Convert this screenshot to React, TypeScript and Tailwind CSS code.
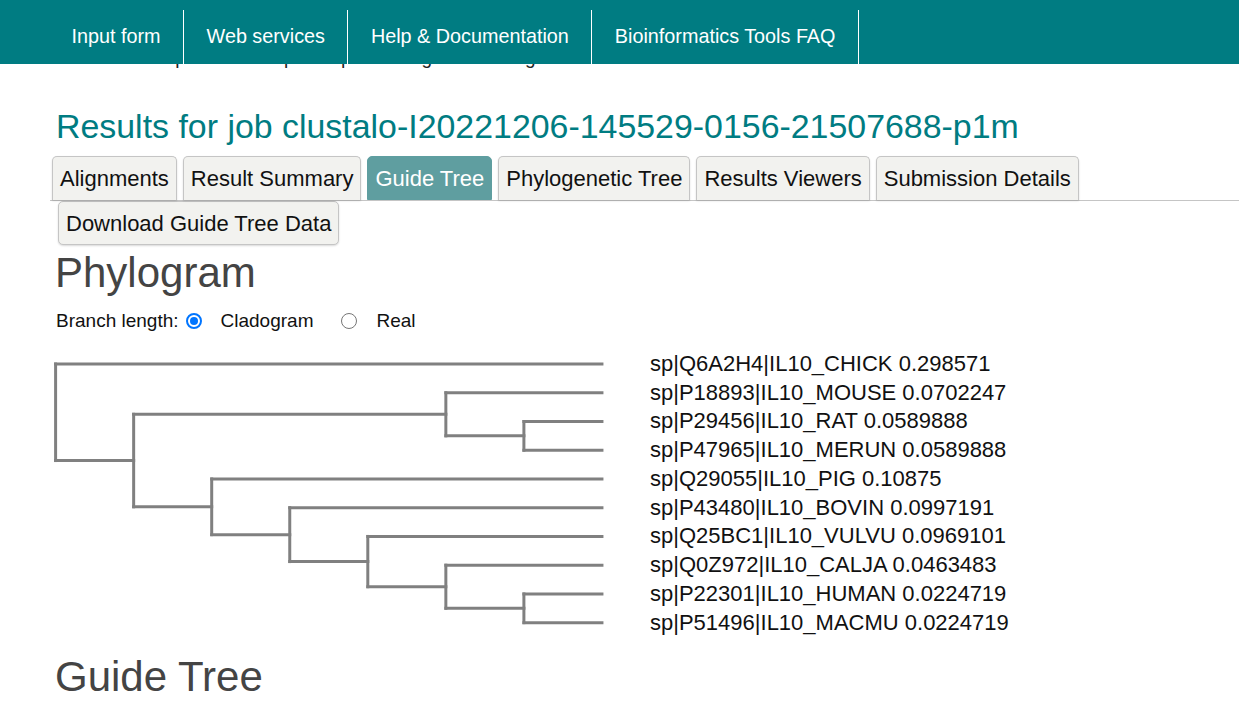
import React from 'react';

type Node = { label?: string; children?: Node[]; depth: number };

const leaf = (label: string): Node => ({ label, depth: 7 });

// cladogram: every internal node sits on a fixed depth column
const tree: Node = {
  depth: 0,
  children: [
    leaf('sp|Q6A2H4|IL10_CHICK 0.298571'),
    {
      depth: 1,
      children: [
        {
          depth: 5,
          children: [
            leaf('sp|P18893|IL10_MOUSE 0.0702247'),
            { depth: 6, children: [leaf('sp|P29456|IL10_RAT 0.0589888'), leaf('sp|P47965|IL10_MERUN 0.0589888')] },
          ],
        },
        {
          depth: 2,
          children: [
            leaf('sp|Q29055|IL10_PIG 0.10875'),
            {
              depth: 3,
              children: [
                leaf('sp|P43480|IL10_BOVIN 0.0997191'),
                {
                  depth: 4,
                  children: [
                    leaf('sp|Q25BC1|IL10_VULVU 0.0969101'),
                    {
                      depth: 5,
                      children: [
                        leaf('sp|Q0Z972|IL10_CALJA 0.0463483'),
                        { depth: 6, children: [leaf('sp|P22301|IL10_HUMAN 0.0224719'), leaf('sp|P51496|IL10_MACMU 0.0224719')] },
                      ],
                    },
                  ],
                },
              ],
            },
          ],
        },
      ],
    },
  ],
};

const X0 = 15.6;
const STEP = 78.05;
const Y0 = 24;
const ROW = 28.74;

function layoutTree(root: Node) {
  const lines: { x1: number; y1: number; x2: number; y2: number }[] = [];
  const labels: { text: string; y: number }[] = [];
  let row = 0;

  const walk = (n: Node): number => {
    const x = X0 + STEP * n.depth;
    if (!n.children) {
      const y = Y0 + ROW * row++;
      labels.push({ text: n.label!, y });
      return y;
    }
    const ys = n.children.map(walk);
    n.children.forEach((c, i) => {
      lines.push({ x1: x, y1: ys[i], x2: X0 + STEP * c.depth, y2: ys[i] });
    });
    lines.push({ x1: x, y1: Math.min(...ys), x2: x, y2: Math.max(...ys) });
    return (Math.min(...ys) + Math.max(...ys)) / 2;
  };
  walk(root);
  return { lines, labels };
}

const navItems = ['Input form', 'Web services', 'Help & Documentation', 'Bioinformatics Tools FAQ'];
const tabs = ['Alignments', 'Result Summary', 'Guide Tree', 'Phylogenetic Tree', 'Results Viewers', 'Submission Details'];

function Phylogram() {
  const { lines, labels } = layoutTree(tree);
  return (
    <svg width={1000} height={314} className="ml-[40px] mt-[6px] block">
      {lines.map((l, i) => (
        <line key={i} {...l} stroke="#808080" strokeWidth={3} strokeLinecap="square" />
      ))}
      {labels.map((l) => (
        <text
          key={l.text}
          x={610}
          y={l.y + 7}
          fontSize={22}
          fill="#111"
          fontFamily="'Liberation Sans', Arial, sans-serif"
        >
          {l.text}
        </text>
      ))}
    </svg>
  );
}

export default function App() {
  return (
    <div className="min-h-[724px] bg-white font-['Liberation_Sans',Arial,sans-serif]">
      <header className="flex h-16 bg-[#007c82] pl-[49px] pt-[10px]">
        {navItems.map((item) => (
          <a
            key={item}
            href="#"
            className="flex items-center border-r border-white px-[22.5px] pb-[1px] text-[19.8px] text-white"
          >
            {item}
          </a>
        ))}
      </header>

      {/* page text scrolled under the sticky header */}
      <div className="h-[5px] overflow-hidden">
        <p className="-mt-[18px] whitespace-nowrap pl-[57px] text-[19px] leading-[23px] text-[#222]">
          This is the output of a multiple sequence alignment using
        </p>
      </div>

      <h1 className="mt-[37px] pl-[56px] text-[33.9px] leading-[40px] text-[#007c82]">
        Results for job clustalo-I20221206-145529-0156-21507688-p1m
      </h1>

      <div className="ml-[50px] mt-[10px] flex h-[45px] items-end gap-[6px] border-b border-[#c5c5c5] pl-[2px]">
        {tabs.map((t) =>
          t === 'Guide Tree' ? (
            <div
              key={t}
              className="flex h-[44px] items-center rounded-t-[5px] border border-[#5f9ea0] bg-[#5f9ea0] px-[7px] text-[22px] text-white"
            >
              {t}
            </div>
          ) : (
            <div
              key={t}
              className="flex h-[44px] items-center rounded-t-[5px] border border-b-0 border-[#c5c5c5] bg-[#f2f2ef] px-[7px] text-[22px] text-[#111] shadow-[0_1px_2px_rgba(0,0,0,0.15)]"
            >
              {t}
            </div>
          )
        )}
      </div>

      <button className="ml-[58px] flex h-[44px] items-center rounded-[5px] border border-[#c5c5c5] bg-[#f2f2ef] px-[7px] text-[22px] text-[#111] shadow-[0_1px_2px_rgba(0,0,0,0.15)]">
        Download Guide Tree Data
      </button>

      <h2 className="mt-[5px] pl-[55px] text-[42px] leading-[46px] text-[#444]">Phylogram</h2>

      <div className="mt-[12px] flex h-[26px] items-center pl-[56px] text-[19px] text-[#111]">
        <span>Branch length:</span>
        <span className="ml-[7px] flex h-4 w-4 items-center justify-center rounded-full border-2 border-[#0075ff] bg-white">
          <span className="h-[8px] w-[8px] rounded-full bg-[#0075ff]" />
        </span>
        <span className="ml-[19px]">Cladogram</span>
        <span className="ml-[28px] h-4 w-4 rounded-full border-[1.5px] border-[#767676] bg-white" />
        <span className="ml-[19px]">Real</span>
      </div>

      <Phylogram />

      <h2 className="pl-[55px] text-[42px] leading-[46px] text-[#444]">Guide Tree</h2>
    </div>
  );
}
